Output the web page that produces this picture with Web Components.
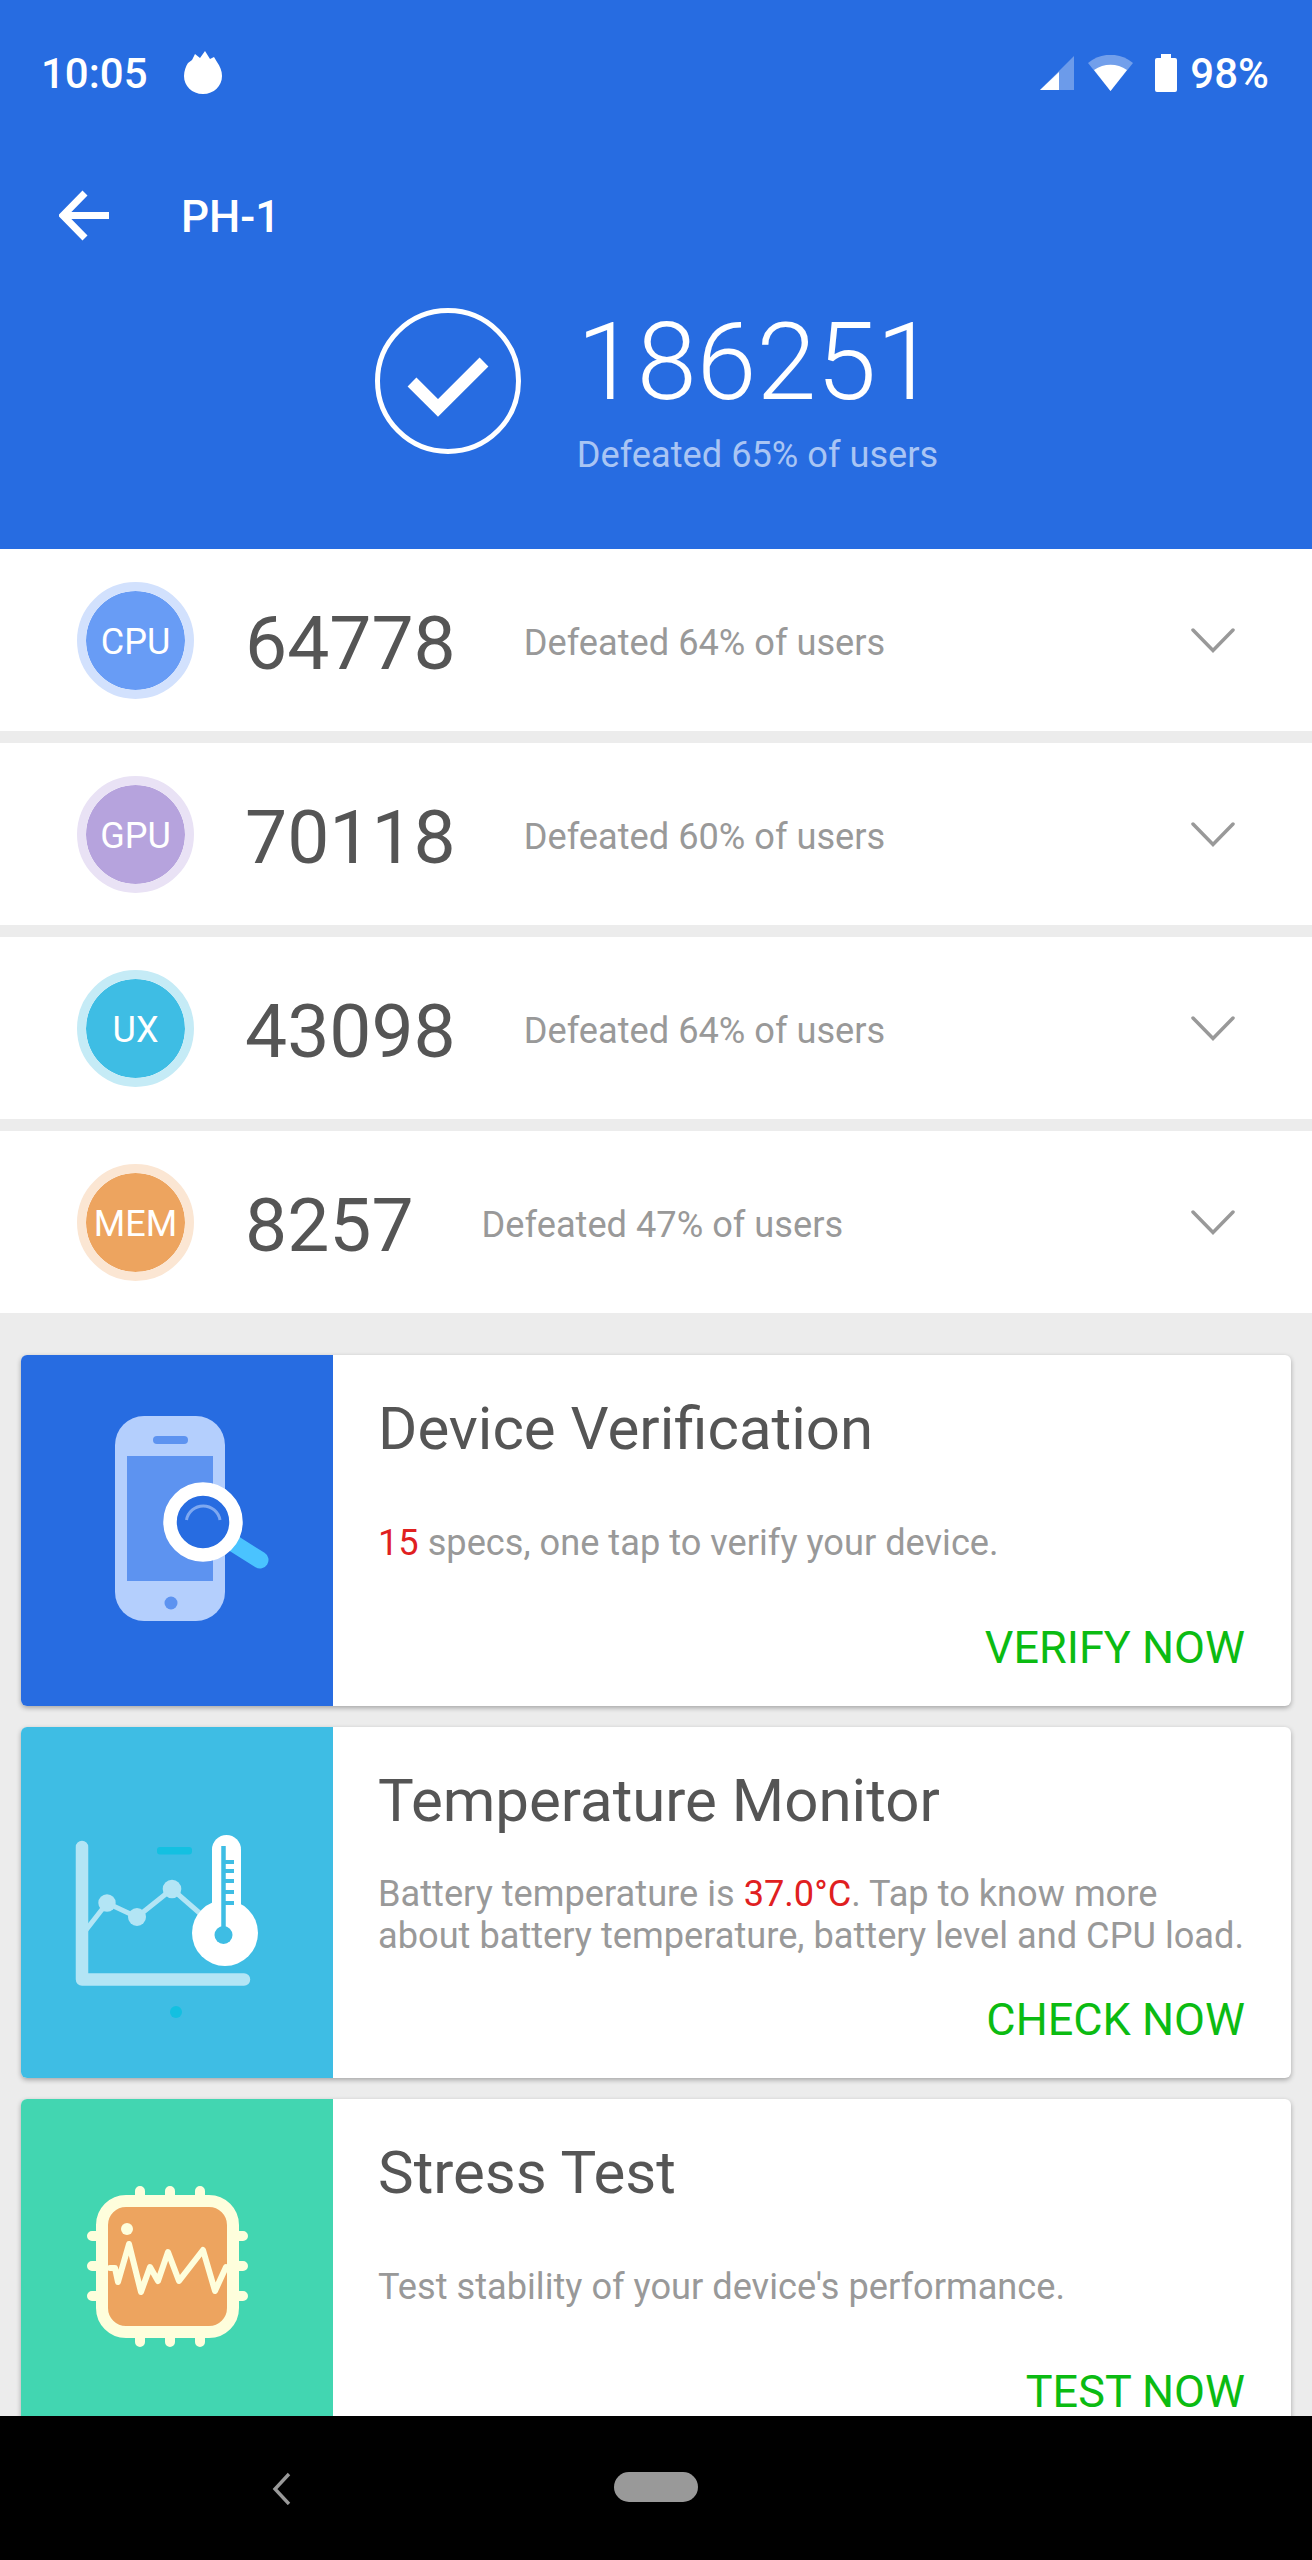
<!DOCTYPE html>
<html>
<head>
<meta charset="utf-8">
<style>
  html, body { margin: 0; padding: 0; background: #ececec; }
  body { font-family: Roboto, "Liberation Sans", sans-serif; }
</style>
</head>
<body>
<bench-app>
  <bench-header score="186251" defeated="Defeated 65% of users" device="PH-1"></bench-header>
  <score-row label="CPU" score="64778" defeated="Defeated 64% of users" ring="#d2e1fd" fill="#689cf5"></score-row>
  <score-row label="GPU" score="70118" defeated="Defeated 60% of users" ring="#e9e2f5" fill="#b6a3dd"></score-row>
  <score-row label="UX" score="43098" defeated="Defeated 64% of users" ring="#c5ebf6" fill="#3ebde4"></score-row>
  <score-row label="MEM" score="8257" defeated="Defeated 47% of users" ring="#fbe6d3" fill="#eda45f"></score-row>
  <tool-card title="Device Verification" action="VERIFY NOW" color="#276ce1" icon="phone">
    <span><b style="color:#e0201f;font-weight:400">15</b> specs, one tap to verify your device.</span>
  </tool-card>
  <tool-card title="Temperature Monitor" action="CHECK NOW" color="#3ebde4" icon="thermo">
    <span>Battery temperature is <b style="color:#e0201f;font-weight:400">37.0°C</b>. Tap to know more about battery temperature, battery level and CPU load.</span>
  </tool-card>
  <tool-card title="Stress Test" action="TEST NOW" color="#42d6b1" icon="chip">
    <span>Test stability of your device's performance.</span>
  </tool-card>
</bench-app>

<script>
const appTemplate = document.createElement("template");
appTemplate.innerHTML = `
  <style>
    :host { display: flex; flex-direction: column; width: 1312px; height: 2560px; overflow: hidden; background: #ececec; }
    .scroll { flex: 1; min-height: 0; overflow: hidden; display: flex; flex-direction: column; }
    .rows { display: flex; flex-direction: column; gap: 12px; }
    .cards { display: flex; flex-direction: column; gap: 21px; padding: 42px 21px 0; }
    .nav { flex: none; height: 144px; background: #000; position: relative; display: flex; align-items: center; justify-content: center; }
    .pill { width: 84px; height: 30px; border-radius: 15px; background: #999; margin-top: -3px; }
    .back { position: absolute; left: 270px; top: 55px; }
  </style>
  <div class="scroll">
    <slot name="head"></slot>
    <div class="rows"><slot name="row"></slot></div>
    <div class="cards"><slot name="card"></slot></div>
  </div>
  <div class="nav">
    <svg class="back" width="22" height="34" viewBox="0 0 22 34"><path d="M19 3 L5 18 L19 33" fill="none" stroke="#999" stroke-width="3.4"/></svg>
    <div class="pill"></div>
  </div>
`;

class BenchApp extends HTMLElement {
  constructor() {
    super();
    const shadow = this.attachShadow({ mode: "open" });
    shadow.appendChild(appTemplate.content.cloneNode(true));
    for (const el of this.children) {
      if (el.localName === "bench-header") el.slot = "head";
      if (el.localName === "score-row") el.slot = "row";
      if (el.localName === "tool-card") el.slot = "card";
    }
  }
}

const headerTemplate = document.createElement("template");
headerTemplate.innerHTML = `
  <style>
    :host { display: flex; flex-direction: column; height: 549px; flex: none; background: #276ce1; color: #fff; box-sizing: border-box; }
    .status { display: flex; align-items: center; height: 146px; padding: 0 43px 0 41px; box-sizing: border-box; }
    .time { font-size: 42px; font-weight: 500; }
    .flame { margin-left: 35px; }
    .spacer { flex: 1; }
    .status svg { display: block; }
    .sig { margin-right: 14px; }
    .wifi { margin-right: 22px; }
    .batt { margin-right: 13px; }
    .pct { font-size: 42px; font-weight: 500; }
    .bar { display: flex; align-items: center; height: 140px; padding-left: 59px; }
    .device { font-size: 44px; font-weight: 500; margin-left: 70px; padding-top: 2px; }
    .result { display: flex; justify-content: center; align-items: flex-start; padding-left: 1px; }
    .num { font-size: 108px; font-weight: 300; line-height: 120px; margin-top: 16px; }
    .sub { font-size: 36.200px; line-height: 44px; color: #a9c5f4; margin-top: 11px; }
    .text { margin-left: 56px; }
    .mark { margin-top: 22px; }
  </style>
  <div class="status">
    <span class="time">10:05</span>
    <svg class="flame" width="40" height="44" viewBox="0 0 40 44"><path d="M22 0 L27 8 L31 6 L34 11 C37 15 39 20 39 25 C39 35 31 43 20 43 C9 43 1 35 1 25 C1 20 3 15 5 12 L9 9 L12 3 L17 7 Z" fill="#fff"/></svg>
    <span class="spacer"></span>
    <svg class="sig" width="34" height="34" viewBox="0 0 34 34"><path d="M34 0 V34 H0 Z" fill="#fff" fill-opacity=".32"/><path d="M19 16 V34 H0 Z" fill="#fff"/></svg>
    <svg class="wifi" width="45" height="36" viewBox="0 0 45 36"><path d="M0 8 C13 -3 32 -3 45 8 L22.5 36 Z" fill="#fff" fill-opacity=".35"/><path d="M6 15 C16 8 29 8 39 15 L22.5 36 Z" fill="#fff"/></svg>
    <svg class="batt" width="22" height="38" viewBox="0 0 22 38"><path d="M6 0 H16 V4 H20 Q22 4 22 6 V36 Q22 38 20 38 H2 Q0 38 0 36 V6 Q0 4 2 4 H6 Z" fill="#fff"/></svg>
    <span class="pct">98%</span>
  </div>
  <div class="bar">
    <svg width="52" height="52" viewBox="0 0 52 52"><path d="M50 25.500 H8 M26 3 L4 25.500 L26 48" fill="none" stroke="#fff" stroke-width="7"/></svg>
    <span class="device"></span>
  </div>
  <div class="result">
    <svg class="mark" width="146" height="146" viewBox="0 0 146 146"><circle cx="73" cy="73" r="70.500" fill="none" stroke="#fff" stroke-width="5"/><path d="M37 74 L63 100 L109 54" fill="none" stroke="#fff" stroke-width="12.500"/></svg>
    <div class="text">
      <div class="num"></div>
      <div class="sub"></div>
    </div>
  </div>
`;

class BenchHeader extends HTMLElement {
  constructor() {
    super();
    const shadow = this.attachShadow({ mode: "open" });
    shadow.appendChild(headerTemplate.content.cloneNode(true));
    shadow.querySelector(".device").textContent = this.getAttribute("device");
    shadow.querySelector(".num").textContent = this.getAttribute("score");
    shadow.querySelector(".sub").textContent = this.getAttribute("defeated");
  }
}

const rowTemplate = document.createElement("template");
rowTemplate.innerHTML = `
  <style>
    :host { display: flex; align-items: center; height: 182px; background: #fff; padding: 0 0 0 77px; flex: none; }
    .badge { width: 117px; height: 117px; box-sizing: border-box; border-radius: 50%; border: 9px solid var(--ring); background: var(--fill); background-clip: padding-box; color: #fff; font-size: 36px; display: flex; align-items: center; justify-content: center; flex: none; padding-top: 4px; }
    .score { font-size: 75px; color: #555; margin-left: 51px; padding-top: 6px; }
    .def { font-size: 36.200px; color: #999; margin-left: 68px; padding-top: 5px; }
    .spacer { flex: 1; }
    svg { margin-right: 77px; flex: none; }
  </style>
  <div class="badge"></div>
  <div class="score"></div>
  <div class="def"></div>
  <div class="spacer"></div>
  <svg width="44" height="26" viewBox="0 0 44 26"><path d="M2 3 L22 23.500 L42 3" fill="none" stroke="#999" stroke-width="3.500" stroke-linecap="round"/></svg>
`;

class ScoreRow extends HTMLElement {
  constructor() {
    super();
    const shadow = this.attachShadow({ mode: "open" });
    shadow.appendChild(rowTemplate.content.cloneNode(true));
    this.style.setProperty("--ring", this.getAttribute("ring"));
    this.style.setProperty("--fill", this.getAttribute("fill"));
    shadow.querySelector(".badge").textContent = this.getAttribute("label");
    shadow.querySelector(".score").textContent = this.getAttribute("score");
    shadow.querySelector(".def").textContent = this.getAttribute("defeated");
  }
}

const icons = {
  phone: `<svg width="312" height="351" viewBox="0 0 312 351">
    <rect x="94" y="61" width="110" height="205" rx="29" fill="#b4cffd"/>
    <rect x="132" y="81" width="35" height="8" rx="4" fill="#5d93f0"/>
    <rect x="106" y="101" width="86" height="125" fill="#5d93f0"/>
    <circle cx="150" cy="248" r="6.500" fill="#5d93f0"/>
    <path d="M212 188 L239 205" stroke="#4ac3ff" stroke-width="17" stroke-linecap="round" fill="none"/>
    <circle cx="182" cy="167" r="33" fill="#276ce1" stroke="#fff" stroke-width="13.500"/>
    <path d="M165.500 165 A17 17 0 0 1 199 165" fill="none" stroke="#7ea8f0" stroke-width="3"/>
  </svg>`,
  thermo: `<svg width="312" height="351" viewBox="0 0 312 351">
    <path d="M61 120 V252.500 H223" fill="none" stroke="#b3e5f5" stroke-width="12.500" stroke-linecap="round" stroke-linejoin="round"/>
    <path d="M65 203 L86 176 L116 190 L151 162 L182 189" fill="none" stroke="#b3e5f5" stroke-width="5"/>
    <circle cx="86" cy="176" r="8.700" fill="#b3e5f5"/><circle cx="116" cy="190" r="9" fill="#b3e5f5"/><circle cx="151" cy="162" r="9.300" fill="#b3e5f5"/>
    <rect x="136" y="120" width="35" height="7.500" rx="3" fill="#13c0e1"/>
    <circle cx="155" cy="285" r="6" fill="#13c0e1"/>
    <rect x="191" y="108" width="29" height="90" rx="14.500" fill="#fff"/>
    <circle cx="204" cy="206" r="33" fill="#fff"/>
    <path d="M202.500 119 V200" stroke="#3ebde4" stroke-width="4.500"/>
    <path d="M204 135 H213 M204 144 H213 M204 154 H213 M204 165 H213 M204 176 H213" stroke="#3ebde4" stroke-width="4"/>
    <circle cx="202.500" cy="208" r="9" fill="#3ebde4"/>
  </svg>`,
  chip: `<svg width="312" height="351" viewBox="0 0 312 351">
    <path d="M119 92 V100 M149 92 V100 M179 92 V100 M119 236 V243 M149 236 V243 M179 236 V243 M71 137 H80 M71 167 H80 M71 197 H80 M214 137 H222 M214 167 H222 M214 197 H222" stroke="#fefedc" stroke-width="10" stroke-linecap="round"/>
    <rect x="81" y="102" width="131" height="131" rx="24" fill="#eda45f" stroke="#fefedc" stroke-width="12"/>
    <circle cx="106" cy="130" r="6" fill="#fefedc"/>
    <path d="M89 169 H94 L97 183 L108 145 L120 193 L129 168 L137 182 L147 153 L158 182 L182 151 L194 192 L205 168" fill="none" stroke="#fefedc" stroke-width="6" stroke-linejoin="round" stroke-linecap="round"/>
  </svg>`,
};

const cardTemplate = document.createElement("template");
cardTemplate.innerHTML = `
  <style>
    :host { display: flex; height: 351px; flex: none; background: #fff; border-radius: 6px; box-shadow: 0 2px 5px rgba(0,0,0,.3); overflow: hidden; }
    .pic { width: 312px; flex: none; }
    .pic svg { display: block; }
    .body { flex: 1; min-width: 0; display: flex; flex-direction: column; padding: 40px 46px 0 45px; box-sizing: border-box; }
    .title { font-size: 60px; line-height: 68px; color: #555; }
    .desc { flex: 1; display: flex; align-items: center; font-size: 36.200px; line-height: 42px; color: #999; }
    .action { font-size: 45px; line-height: 50px; color: #0bbb12; text-align: right; margin-bottom: 33px; }
  </style>
  <div class="pic"></div>
  <div class="body">
    <div class="title"></div>
    <div class="desc"><slot></slot></div>
    <div class="action"></div>
  </div>
`;

class ToolCard extends HTMLElement {
  constructor() {
    super();
    const shadow = this.attachShadow({ mode: "open" });
    shadow.appendChild(cardTemplate.content.cloneNode(true));
    const pic = shadow.querySelector(".pic");
    pic.style.background = this.getAttribute("color");
    pic.innerHTML = icons[this.getAttribute("icon")];
    shadow.querySelector(".title").textContent = this.getAttribute("title");
    shadow.querySelector(".action").textContent = this.getAttribute("action");
  }
}

customElements.define("bench-app", BenchApp);
customElements.define("bench-header", BenchHeader);
customElements.define("score-row", ScoreRow);
customElements.define("tool-card", ToolCard);
</script>
</body>
</html>
